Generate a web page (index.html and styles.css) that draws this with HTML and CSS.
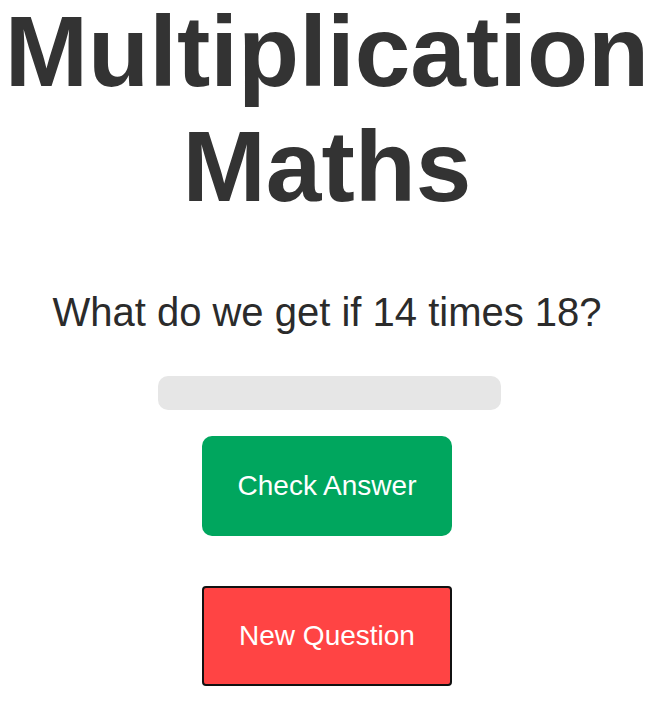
FILE: index.html
```html
<!DOCTYPE html>
<html>
<head>
<meta charset="utf-8">
<link rel="stylesheet" href="styles.css">
</head>
<body>
<main class="app">
  <h1 class="title"><span class="title-line first">Multiplication</span> <span class="title-line second">Maths</span></h1>
  <p class="question">What do we get if 14 times 18?</p>
  <input class="answer" type="text">
  <button class="btn btn-check">Check Answer</button>
  <button class="btn btn-new">New Question</button>
</main>
</body>
</html>
```

FILE: styles.css
```css
html, body {
  margin: 0;
  padding: 0;
  background: #ffffff;
}
.app {
  display: flex;
  flex-direction: column;
  align-items: center;
  padding-right: 7px;
  font-family: "Liberation Sans", Arial, sans-serif;
  text-align: center;
}
.title {
  margin: 0;
  font-size: 100px;
  font-weight: bold;
  color: #333333;
}
.title-line {
  display: block;
}
.title-line.first {
  line-height: 103px;
}
.title-line.second {
  line-height: 127px;
}
.question {
  margin: 59px 0 0 0;
  font-size: 40px;
  line-height: 46px;
  color: #2b2b2b;
}
.answer {
  margin-top: 41px;
  margin-left: 4px;
  width: 343px;
  height: 34px;
  box-sizing: border-box;
  border: none;
  border-radius: 10px;
  background: #e6e6e6;
  outline: none;
  padding: 0 10px;
}
.btn {
  width: 250px;
  height: 100px;
  box-sizing: border-box;
  font-family: "Liberation Sans", Arial, sans-serif;
  font-size: 28px;
  color: #ffffff;
  cursor: pointer;
}
.btn-check {
  margin-top: 26px;
  border: none;
  border-radius: 10px;
  background: #00a65e;
}
.btn-new {
  margin-top: 50px;
  border: 2px solid #111111;
  border-radius: 4px;
  background: #ff4444;
}
```
